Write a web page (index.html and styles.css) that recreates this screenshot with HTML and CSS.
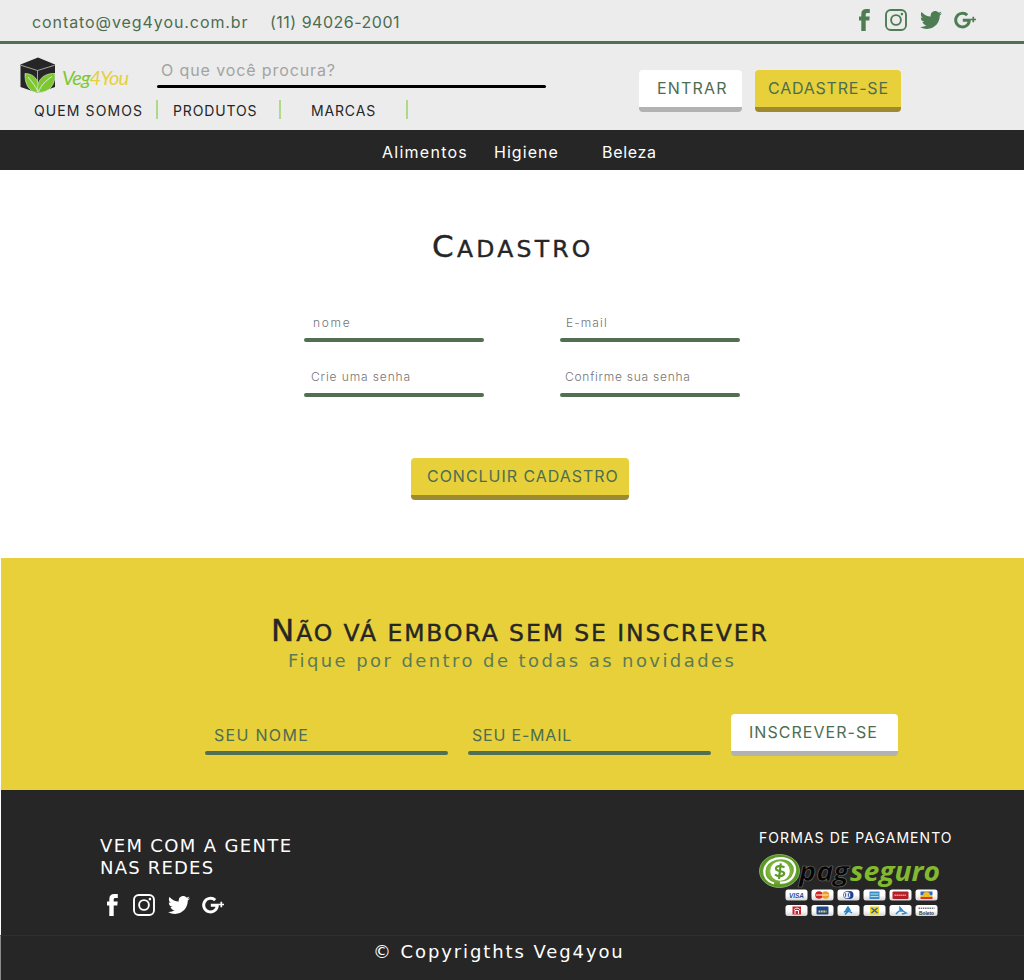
FILE: index.html
```html
<!DOCTYPE html>
<html lang="pt-BR">
<head>
<meta charset="utf-8">
<title>Veg4You - Cadastro</title>
<link rel="stylesheet" href="styles.css">
</head>
<body>
<svg class="sprite" aria-hidden="true">
  <symbol id="facebook" viewBox="0 0 11 22"><path d="M2.300 22V11.400H0V7.600h2.300V5C2.300 1.700 4.200 0 7.200 0H10.800V3.900H8.500C7.200 3.900 6.700 4.500 6.700 5.600V7.600H10.700L10.300 11.400H6.700V22Z" fill="currentColor"/></symbol>
  <symbol id="instagram" viewBox="0 0 22 22"><g fill="none" stroke="currentColor" stroke-width="1.900"><rect x="1" y="1" width="20" height="20" rx="4.800"/><circle cx="11" cy="11" r="4.900"/></g><circle cx="16.900" cy="5.100" r="1.300" fill="currentColor"/></symbol>
  <symbol id="twitter" viewBox="0 2.200 24 19.600"><path fill="currentColor" d="M23.953 4.570a10 10 0 01-2.825.775 4.958 4.958 0 002.163-2.723c-.951.555-2.005.959-3.127 1.184a4.920 4.920 0 00-8.384 4.482C7.690 8.095 4.067 6.130 1.640 3.162a4.822 4.822 0 00-.666 2.475c0 1.710.870 3.213 2.188 4.096a4.904 4.904 0 01-2.228-.616v.060a4.923 4.923 0 003.946 4.827 4.996 4.996 0 01-2.212.085 4.936 4.936 0 004.604 3.417 9.867 9.867 0 01-6.102 2.105c-.390 0-.779-.023-1.170-.067a13.995 13.995 0 007.557 2.209c9.053 0 13.998-7.496 13.998-13.985 0-.210 0-.420-.015-.630A9.935 9.935 0 0024 4.590z"/></symbol>
  <symbol id="gplus" viewBox="0 0 22 18"><path fill="none" stroke="currentColor" stroke-width="3" d="M13.200 4.200A6.800 6.800 0 1 0 15.300 9.300H8.800"/><path fill="none" stroke="currentColor" stroke-width="1.700" d="M19.300 5.800v5.400M16.500 8.500H22"/></symbol>
</svg>

<div class="topbar">
  <span class="t-mail">contato@veg4you.com.br</span>
  <span class="t-phone">(11) 94026-2001</span>
  <div class="social">
    <svg class="i-fb"><use href="#facebook"/></svg>
    <svg class="i-ig"><use href="#instagram"/></svg>
    <svg class="i-tw"><use href="#twitter"/></svg>
    <svg class="i-gp"><use href="#gplus"/></svg>
  </div>
</div>

<header class="header">
  <div class="brand-area">
    <div class="brand-row">
      <svg class="logo" viewBox="0 0 120 40">
        <path d="M.500 8.500 18 1.500 35 8.500V31L18 37 .500 31Z" fill="#262626"/>
        <path d="M1 9.300 17.500 14.500 34.500 9.300M17.500 14.500V33" fill="none" stroke="#d8d8d8" stroke-width=".7"/>
        <path d="M18.500 36.500C9 36.500 4.500 28 5 17.500 13.500 17.500 20.500 24 18.500 36.500Z" fill="#7dc832" stroke="#ececec" stroke-width=".6"/>
        <path d="M18 36.500C15.500 25 23 17 35 17.500 35.500 29 29 37 18 36.500Z" fill="#7dc832" stroke="#ececec" stroke-width=".6"/>
        <path d="M8 21C11 25 15 29 18 36M32 20.500C26 24.500 21 29 18.500 36" fill="none" stroke="#ececec" stroke-width=".9"/>
        <text x="42" y="28.500" textLength="67" lengthAdjust="spacing" class="lettering"><tspan class="veg">Veg</tspan><tspan class="you">4You</tspan></text>
      </svg>
      <div class="search">O que você procura?</div>
    </div>
    <nav class="menu">
      <a class="m-who">QUEM SOMOS</a>
      <a class="m-products">PRODUTOS</a>
      <a class="m-brands">MARCAS</a>
    </nav>
  </div>
  <a class="btn btn-white b-enter">ENTRAR</a>
  <a class="btn btn-yellow b-signup">CADASTRE-SE</a>
</header>

<nav class="categories">
  <a class="c-food">Alimentos</a>
  <a class="c-hygiene">Higiene</a>
  <a class="c-beauty">Beleza</a>
</nav>

<main class="signup">
  <h1>Cadastro</h1>
  <div class="fields">
    <div class="field f-name">nome</div>
    <div class="field f-mail">E-mail</div>
    <div class="field f-pass">Crie uma senha</div>
    <div class="field f-confirm">Confirme sua senha</div>
  </div>
  <a class="btn btn-yellow b-finish">CONCLUIR CADASTRO</a>
</main>

<section class="newsletter">
  <h2>Não vá embora sem se inscrever</h2>
  <p>Fique por dentro de todas as novidades</p>
  <div class="news-form">
    <div class="line-input n-name">SEU NOME</div>
    <div class="line-input n-mail">SEU E-MAIL</div>
    <a class="btn btn-white b-subscribe">INSCREVER-SE</a>
  </div>
</section>

<footer class="footer">
  <div class="footer-main">
    <div class="networks">
      <div class="follow-1">VEM COM A GENTE</div>
      <div class="follow-2">NAS REDES</div>
      <div class="social">
        <svg class="i-fb"><use href="#facebook"/></svg>
        <svg class="i-ig"><use href="#instagram"/></svg>
        <svg class="i-tw"><use href="#twitter"/></svg>
        <svg class="i-gp"><use href="#gplus"/></svg>
      </div>
    </div>
    <div class="payment">
      <div class="pay-title">FORMAS DE PAGAMENTO</div>
      <svg class="pay" viewBox="1 -1 184 66">
        <defs>
          <radialGradient id="lime"><stop offset=".5" stop-color="#83b93c"/><stop offset="1" stop-color="#4f8f25"/></radialGradient>
          <linearGradient id="card" x2="0" y2="1"><stop offset=".5" stop-color="#fff"/><stop offset="1" stop-color="#d5d5d5"/></linearGradient>
        </defs>
        <ellipse cx="21.500" cy="17" rx="20" ry="16.500" fill="url(#lime)" stroke="#9ac466" stroke-width=".8"/>
        <path d="M16 29.500C2 25 3.500 8.500 18 4.600 31 2 39 10 36.500 19 34.500 26 28 29.500 22 28.500" fill="none" stroke="#fff" stroke-width="2.300"/>
        <circle cx="22" cy="17" r="9.800" fill="#fff"/>
        <path d="M26.500 13.500C24 11.300 17.500 11.500 18 14.800S26.500 16.500 26.200 19.500 20 23 17 20.500M22.800 9.300 21 25" fill="none" stroke="#5c9a2b" stroke-width="2.200"/>
        <g class="pag">
          <text x="41" y="27" textLength="50" lengthAdjust="spacingAndGlyphs" fill="#050505" stroke="#6c6c6c" stroke-width=".6">pag</text>
          <text x="92" y="27" textLength="90" lengthAdjust="spacingAndGlyphs" fill="#82b92f">seguro</text>
        </g>
        <g fill="url(#card)">
          <rect x="27.500" y="35.500" width="22" height="11" rx="2.500"/><rect x="53.500" y="35.500" width="22" height="11" rx="2.500"/><rect x="79.500" y="35.500" width="22" height="11" rx="2.500"/><rect x="105.500" y="35.500" width="22" height="11" rx="2.500"/><rect x="131.500" y="35.500" width="22" height="11" rx="2.500"/><rect x="157.500" y="35.500" width="22" height="11" rx="2.500"/>
          <rect x="27.500" y="51" width="22" height="11" rx="2.500"/><rect x="53.500" y="51" width="22" height="11" rx="2.500"/><rect x="79.500" y="51" width="22" height="11" rx="2.500"/><rect x="105.500" y="51" width="22" height="11" rx="2.500"/><rect x="131.500" y="51" width="22" height="11" rx="2.500"/><rect x="157.500" y="51" width="22" height="11" rx="2.500"/>
        </g>
        <text x="31" y="43.500" class="visa" textLength="15" lengthAdjust="spacingAndGlyphs">VISA</text>
        <circle cx="61" cy="41" r="3.800" fill="#cf2229"/><circle cx="67.500" cy="41" r="3.800" fill="#f09a28"/><path d="M58 41h12.500" stroke="#fbe3c0" stroke-width="1.200"/>
        <circle cx="91.500" cy="41" r="4" fill="#1f3f90"/><circle cx="89" cy="41" r="3.600" fill="#fff" stroke="#1f3f90" stroke-width=".7"/><path d="M87.700 39.200v3.600M90.300 39.200v3.600" stroke="#1f3f90"/>
        <rect x="111.500" y="37.500" width="10" height="7.500" fill="#3c8fc6"/><path d="M112.500 40h8M112.500 42.500h8" stroke="#c9e4f2" stroke-width=".9"/>
        <rect x="134.500" y="37.500" width="16" height="7.500" rx="1" fill="#b41f27"/><path d="M136.500 41.300h12" stroke="#f0b5b5" stroke-width="1.400" stroke-dasharray="1.300 .7"/>
        <rect x="162.500" y="37.500" width="12" height="3.500" fill="#3269b5"/><rect x="162.500" y="41" width="12" height="2" fill="#f1bd22"/><rect x="162.500" y="43" width="12" height="2" fill="#d8372d"/><path d="M165 41a3.500 3 0 0 1 7 0z" fill="#f1bd22"/>
        <rect x="34.500" y="52.500" width="8.500" height="8" fill="#c8202e"/><path d="M36 56c1-2.500 5-2.500 6 0M37 60v-3.500h3.500V60" fill="none" stroke="#fff"/>
        <rect x="58.500" y="52.500" width="12" height="8" rx="1" fill="#1d4696"/><path d="M60.500 57.500h8" stroke="#f5d52b" stroke-width="2" stroke-dasharray="1.800 .6"/>
        <path d="M90 53l-2 3h4zm-4 5c2-1 6-1 8 1M87 60.500l4-4" fill="none" stroke="#2383c4" stroke-width="1.400"/>
        <rect x="112" y="52.500" width="9" height="8" fill="#f0d31f"/><path d="m113.500 54 6 5m0-5-6 5" stroke="#2861a5" stroke-width="1.300"/>
        <path d="M142 53.500v3.500h3zm-4 6.500 3-3M144 60l4-1-3-2" fill="none" stroke="#288ad0" stroke-width="1.500"/>
        <path d="M160.500 54.300h16" stroke="#777" stroke-width="1.600" stroke-dasharray="1.500 .7"/><text x="161" y="60.500" class="boleto" textLength="15" lengthAdjust="spacingAndGlyphs">Boleto</text>
      </svg>
    </div>
  </div>
  <div class="copyright">© Copyrigthts Veg4you</div>
</footer>
</body>
</html>
```
FILE: styles.css
```css
* { box-sizing: border-box; }
body { margin: 0; background: #fff; color: #262626; font: 16px/20px Inter, "Open Sans", sans-serif; }
h1, h2, p { margin: 0; font-weight: 400; }
svg { display: block; flex: none; }
a, span { white-space: nowrap; }
.sprite { position: absolute; width: 0; height: 0; }

.topbar { display: flex; height: 44px; padding: 0 48px 0 32px; background: #ececec; border-bottom: 3px solid #516f53; color: #4d6d51; }
.topbar span { padding-top: 12px; }
.t-mail { width: 238px; letter-spacing: 0.92px; }
.t-phone { letter-spacing: 0.5px; }
.social { display: flex; color: #4e7c53; }
.topbar .social { margin-left: auto; padding-top: 9px; }
.i-fb { width: 11px; height: 22px; margin-right: 15px; }
.i-ig { width: 22px; height: 22px; margin-right: 13px; }
.i-tw { width: 22px; height: 18px; margin: 2px 12px 0 0; }
.i-gp { width: 22px; height: 18px; margin-top: 2px; }

.header { display: flex; height: 86px; padding-left: 20px; background: #ececec; }
.brand-area { width: 619px; padding-top: 12px; }
.brand-row { display: flex; height: 32px; }
.logo { width: 120px; height: 40px; margin-right: 17px; }
.lettering { font: italic 20px Lato, sans-serif; }
.veg { fill: #7dc832; }
.you { fill: #e7d03b; }
.search { position: relative; width: 389px; height: 32px; padding: 4px 0 0 4px; color: #a3a3a3; letter-spacing: 0.89px; }
.search::after, .field::after, .line-input::after { content: ""; position: absolute; left: 0; right: 0; bottom: 0; height: 4px; border-radius: 2px; background: #516f53; }
.search::after { height: 3px; background: #000; }
.menu { display: flex; margin-top: 12px; font-size: 14px; }
.menu a { height: 19px; border-right: 2px solid #acd98b; line-height: 22px; }
.m-who { width: 138px; padding-left: 14px; letter-spacing: 1.1px; }
.m-products { width: 123px; padding-left: 15px; letter-spacing: 0.85px; }
.m-brands { width: 127px; padding-left: 30px; letter-spacing: 0.85px; }

.btn { display: block; height: 42px; padding-top: 8px; border-bottom: 5px solid #b2b2b2; border-radius: 4px; color: #4d6d51; }
.btn-white { background: #fff; }
.btn-yellow { background: #e7d03a; border-color: #9d8a31; }
.header .btn { margin-top: 26px; }
.b-enter { width: 103px; margin-right: 13px; padding-left: 18px; letter-spacing: 1.2px; }
.b-signup { width: 146px; padding-left: 13px; letter-spacing: 0.78px; }

.categories { display: flex; height: 40px; padding: 12px 0 0 382px; background: #262626; color: #fff; }
.c-food { width: 112px; letter-spacing: 1.26px; }
.c-hygiene { width: 108px; letter-spacing: 1.05px; }
.c-beauty { letter-spacing: 0.7px; }

.signup { height: 388px; padding-top: 56px; }
h1, h2 { height: 40px; font-family: "DejaVu Sans", sans-serif; font-size: 23.5px; line-height: 40px; text-transform: uppercase; white-space: nowrap; -webkit-text-stroke: 0.4px #262626; }
h1::first-letter, h2::first-letter { font-size: 31px; line-height: 30px; }
h1 { padding: 3px 0 0 432px; letter-spacing: 3.25px; }
.fields { display: grid; grid-template-columns: 180px 180px; column-gap: 76px; row-gap: 23px; padding: 46px 0 0 304px; }
.field { position: relative; height: 30px; padding-top: 1px; font-size: 12px; font-weight: 300; line-height: 20px; color: #747474; }
.f-name { padding-left: 9px; letter-spacing: 1.7px; }
.f-mail { padding-left: 6px; letter-spacing: 1.1px; }
.f-pass, .f-confirm { height: 32px; padding-top: 2px; }
.f-pass { padding-left: 7px; letter-spacing: 0.88px; }
.f-confirm { padding-left: 5px; letter-spacing: 0.75px; }
.b-finish { width: 218px; margin: 61px 0 0 411px; padding-left: 16px; letter-spacing: 0.97px; }

.newsletter { height: 232px; margin-left: 1px; padding-top: 52px; background: #e7d03a; color: #262626; }
h2 { padding: 3px 0 0 270px; letter-spacing: 1.92px; }
.newsletter p { margin-top: 1px; padding-left: 287px; font: 18px/20px "DejaVu Sans", sans-serif; letter-spacing: 2.42px; color: #5c7a57; }
.news-form { display: flex; padding: 43px 0 0 204px; }
.line-input { position: relative; width: 243px; height: 41px; margin-right: 20px; padding-top: 11px; color: #4d6d51; }
.n-name { padding-left: 9px; letter-spacing: 1.3px; }
.n-mail { padding-left: 4px; letter-spacing: 0.8px; }
.b-subscribe { width: 167px; padding-left: 18px; letter-spacing: 1.05px; }

.footer { margin-left: 1px; background: #262626; color: #fff; }
.footer-main { display: flex; justify-content: space-between; height: 145px; padding: 38px 71px 0 99px; }
.networks { padding-top: 7px; font: 18px/22px "DejaVu Sans", sans-serif; }
.follow-1 { letter-spacing: 1.35px; }
.follow-2 { letter-spacing: 1.2px; }
.footer .social { color: #fff; padding: 15px 0 0 7px; }
.payment { width: 194px; }
.pay-title { font-size: 14px; letter-spacing: 1.06px; white-space: nowrap; }
.pay { width: 184px; height: 66px; margin-top: 5px; }
.pag { font: italic bold 26px "Open Sans", sans-serif; }
.visa { font: italic bold 7px "Liberation Sans", sans-serif; fill: #1f4a9c; }
.boleto { font: bold 5px "Liberation Sans", sans-serif; fill: #333; }
.copyright { height: 45px; margin-left: -1px; padding: 6px 0 0 372px; border-top: 1px solid #303030; border-left: 1px solid #8c8c8c; background: #262626; font: 18px/20px "DejaVu Sans", sans-serif; letter-spacing: 1.9px; }
```
